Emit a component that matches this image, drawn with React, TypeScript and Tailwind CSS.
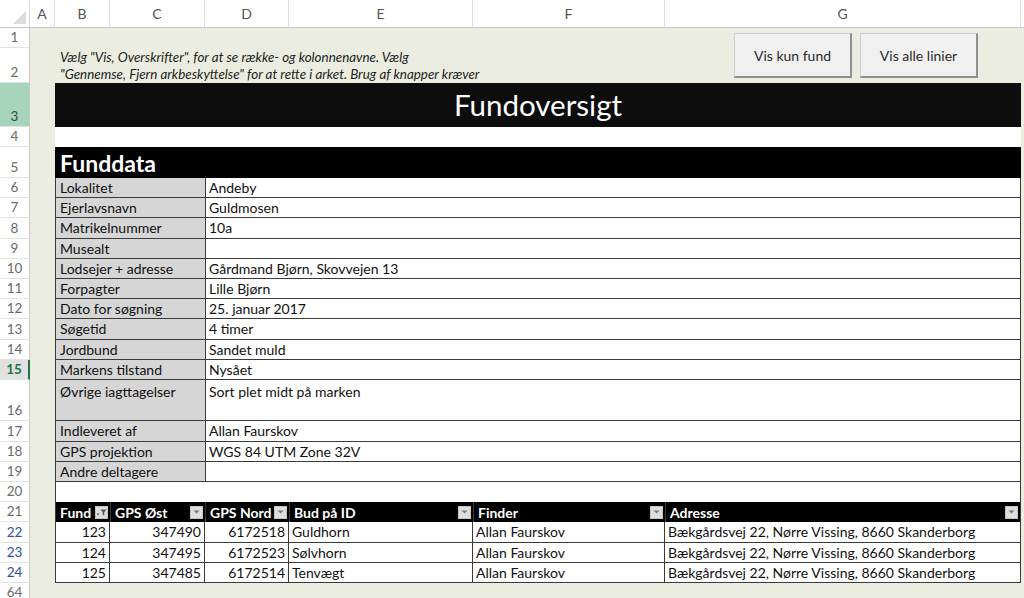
import React from 'react';

// Column widths (px): A, B, C, D, E, F, G
const COLS = [
  { id: 'A', w: 'w-[25px]' },
  { id: 'B', w: 'w-[55px]' },
  { id: 'C', w: 'w-[95px]' },
  { id: 'D', w: 'w-[84px]' },
  { id: 'E', w: 'w-[184px]' },
  { id: 'F', w: 'w-[192px]' },
  { id: 'G', w: 'w-[356px]' },
];

const FUNDDATA = [
  { label: 'Lokalitet', value: 'Andeby' },
  { label: 'Ejerlavsnavn', value: 'Guldmosen' },
  { label: 'Matrikelnummer', value: '10a' },
  { label: 'Musealt', value: '' },
  { label: 'Lodsejer + adresse', value: 'Gårdmand Bjørn, Skovvejen 13' },
  { label: 'Forpagter', value: 'Lille Bjørn' },
  { label: 'Dato for søgning', value: '25. januar 2017' },
  { label: 'Søgetid', value: '4 timer' },
  { label: 'Jordbund', value: 'Sandet muld' },
  { label: 'Markens tilstand', value: 'Nysået', active: true },
  { label: 'Øvrige iagttagelser', value: 'Sort plet midt på marken', tall: true },
  { label: 'Indleveret af', value: 'Allan Faurskov' },
  { label: 'GPS projektion', value: 'WGS 84 UTM Zone 32V' },
  { label: 'Andre deltagere', value: '' },
];

const FUND = [
  { fund: '123', ost: '347490', nord: '6172518', id: 'Guldhorn', finder: 'Allan Faurskov', adr: 'Bækgårdsvej 22, Nørre Vissing, 8660 Skanderborg' },
  { fund: '124', ost: '347495', nord: '6172523', id: 'Sølvhorn', finder: 'Allan Faurskov', adr: 'Bækgårdsvej 22, Nørre Vissing, 8660 Skanderborg' },
  { fund: '125', ost: '347485', nord: '6172514', id: 'Tenvægt', finder: 'Allan Faurskov', adr: 'Bækgårdsvej 22, Nørre Vissing, 8660 Skanderborg' },
];

type HeadKind = 'normal' | 'selected' | 'active' | 'filtered';

function RowHead({ n, h, kind = 'normal' }: { n: string; h: string; kind?: HeadKind }) {
  let tone = 'bg-white text-[#6b6b6b] border-r border-[#c8c8c8]';
  if (kind === 'selected') tone = 'bg-[#a7d5bb] text-[#3c4a42] border-r border-[#c8c8c8]';
  if (kind === 'active') tone = 'bg-[#e1e1e1] text-[#217346] font-bold border-r-2 border-[#217346]';
  if (kind === 'filtered') tone = 'bg-white text-[#2a52a8] border-r border-[#c8c8c8]';
  return (
    <div className={`w-[30px] shrink-0 ${h} ${tone} border-b border-b-[#e2e2e2] flex items-end justify-center pb-[1px] text-[13.5px] leading-[17px]`}>
      {n}
    </div>
  );
}

function SheetRow({ n, h, kind, children }: { n: string; h: string; kind?: HeadKind; children?: React.ReactNode }) {
  return (
    <div className={`flex ${h}`}>
      <RowHead n={n} h={h} kind={kind} />
      <div className="w-[25px] shrink-0" />
      <div className="w-[966px] shrink-0 flex">{children}</div>
      <div className="flex-1" />
    </div>
  );
}

function FilterButton({ sorted }: { sorted?: boolean }) {
  return (
    <div className="w-[13px] h-[13px] shrink-0 bg-[#dedede] border border-[#c4c4c4] flex items-center justify-center">
      {sorted ? (
        <svg width="11" height="9" viewBox="0 0 11 9">
          <path d="M0.5 5.5h3l-1.5 2z" fill="#555" />
          <path d="M4.5 1.5h6l-2.2 2.8v3.2l-1.6 -0.8v-2.4z" fill="#555" />
        </svg>
      ) : (
        <svg width="7" height="4" viewBox="0 0 7 4">
          <path d="M0.5 0.5h6l-3 3z" fill="#777" />
        </svg>
      )}
    </div>
  );
}

function HeadCell({ w, label, sorted, last }: { w: string; label: string; sorted?: boolean; last?: boolean }) {
  return (
    <div className={`${w} shrink-0 flex items-center justify-between pl-[4px] pr-[2px] ${last ? '' : 'border-r border-[#3a3a3a]'}`}>
      <span className="font-bold text-white">{label}</span>
      <FilterButton sorted={sorted} />
    </div>
  );
}

function Cell({ w, children, right, last }: { w: string; children?: React.ReactNode; right?: boolean; last?: boolean }) {
  return (
    <div className={`${w} shrink-0 flex items-center px-[3px] whitespace-nowrap overflow-hidden ${right ? 'justify-end' : ''} ${last ? '' : 'border-r border-[#3a3a3a]'}`}>
      {children}
    </div>
  );
}

function XlButton({ label }: { label: string }) {
  return (
    <button className="w-[118px] h-[45px] bg-[#f0f0f0] border border-[#cfcfcf] border-r-2 border-b-2 border-r-[#8f8f8f] border-b-[#8f8f8f] text-[14px] text-[#2b2b2b] flex items-center justify-center">
      {label}
    </button>
  );
}

export default function App() {
  return (
    <div className="w-[1024px] h-[598px] overflow-hidden bg-[#eaeddf] text-[14px] text-[#111] font-['Lato','Open_Sans',sans-serif]">
      {/* Column headers */}
      <div className="flex h-[28px] bg-white border-b border-[#c6c6c6]">
        <div className="w-[30px] shrink-0 border-r border-[#d8d8d8] flex items-end justify-end p-[3px]">
          <svg width="13" height="13" viewBox="0 0 13 13">
            <path d="M13 0v13H0z" fill="#dcdcdc" />
          </svg>
        </div>
        {COLS.map((c) => (
          <div key={c.id} className={`${c.w} shrink-0 border-r border-[#dedede] flex items-center justify-center text-[14px] text-[#555]`}>
            {c.id}
          </div>
        ))}
        <div className="flex-1" />
      </div>

      {/* Rows 1-2 with info text and buttons */}
      <div className="flex h-[55px]">
        <div className="flex flex-col">
          <RowHead n="1" h="h-[20px]" />
          <RowHead n="2" h="h-[35px]" />
        </div>
        <div className="w-[25px] shrink-0" />
        <div className="w-[966px] shrink-0 flex">
          <div className="w-[610px] shrink-0 flex items-end pl-[5px]">
            <p className="italic text-[13.4px] leading-[17px] text-[#1e1e1e] whitespace-nowrap">
              Vælg "Vis, Overskrifter", for at se række- og kolonnenavne. Vælg
              <br />
              "Gennemse, Fjern arkbeskyttelse" for at rette i arket. Brug af knapper kræver
            </p>
          </div>
          <div className="flex gap-[8px] pl-[69px] pt-[5px]">
            <XlButton label="Vis kun fund" />
            <XlButton label="Vis alle linier" />
          </div>
        </div>
      </div>

      {/* Row 3: title */}
      <SheetRow n="3" h="h-[44px]" kind="selected">
        <div className="flex-1 bg-[#0d0d0d] flex items-center justify-center text-white text-[29.5px] leading-none">
          Fundoversigt
        </div>
      </SheetRow>

      {/* Row 4 */}
      <SheetRow n="4" h="h-[20px]">
        <div className="flex-1 bg-white" />
      </SheetRow>

      {/* Row 5: Funddata */}
      <SheetRow n="5" h="h-[31px]">
        <div className="flex-1 bg-black flex items-end pl-[5px] pb-[1px] text-white font-bold text-[23px] leading-[28px]">
          Funddata
        </div>
      </SheetRow>

      {/* Rows 6-19 */}
      {FUNDDATA.map((r, i) => (
        <SheetRow
          key={r.label}
          n={String(6 + i)}
          h={r.tall ? 'h-[41.5px]' : 'h-[20.2px]'}
          kind={r.active ? 'active' : 'normal'}
        >
          <div className="flex-1 flex border-l border-b border-r border-[#3a3a3a] bg-white">
            <div className={`w-[150px] shrink-0 bg-[#d6d6d6] border-r border-[#3a3a3a] px-[4px] flex ${r.tall ? 'items-start pt-[1px]' : 'items-center'}`}>
              {r.label}
            </div>
            <div className={`flex-1 px-[3px] flex ${r.tall ? 'items-start pt-[1px]' : 'items-center'}`}>{r.value}</div>
          </div>
        </SheetRow>
      ))}

      {/* Row 20 */}
      <SheetRow n="20" h="h-[20.2px]">
        <div className="flex-1 bg-white border-l border-r border-[#3a3a3a]" />
      </SheetRow>

      {/* Row 21: table header */}
      <SheetRow n="21" h="h-[20.2px]">
        <div className="flex-1 flex bg-black border-l border-r border-[#3a3a3a]">
          <HeadCell w="w-[55px]" label="Fund" sorted />
          <HeadCell w="w-[95px]" label="GPS Øst" />
          <HeadCell w="w-[84px]" label="GPS Nord" />
          <HeadCell w="w-[184px]" label="Bud på ID" />
          <HeadCell w="w-[192px]" label="Finder" />
          <HeadCell w="w-[354px]" label="Adresse" last />
        </div>
      </SheetRow>

      {/* Rows 22-24 */}
      {FUND.map((f, i) => (
        <SheetRow key={f.fund} n={String(22 + i)} h="h-[20.2px]" kind="filtered">
          <div className="flex-1 flex bg-white border-l border-r border-b border-[#3a3a3a]">
            <Cell w="w-[54px]" right>{f.fund}</Cell>
            <Cell w="w-[95px]" right>{f.ost}</Cell>
            <Cell w="w-[84px]" right>{f.nord}</Cell>
            <Cell w="w-[184px]">{f.id}</Cell>
            <Cell w="w-[192px]">{f.finder}</Cell>
            <Cell w="w-[354px]" last>{f.adr}</Cell>
          </div>
        </SheetRow>
      ))}

      {/* Row 64 */}
      <SheetRow n="64" h="h-[20px]" />
    </div>
  );
}
